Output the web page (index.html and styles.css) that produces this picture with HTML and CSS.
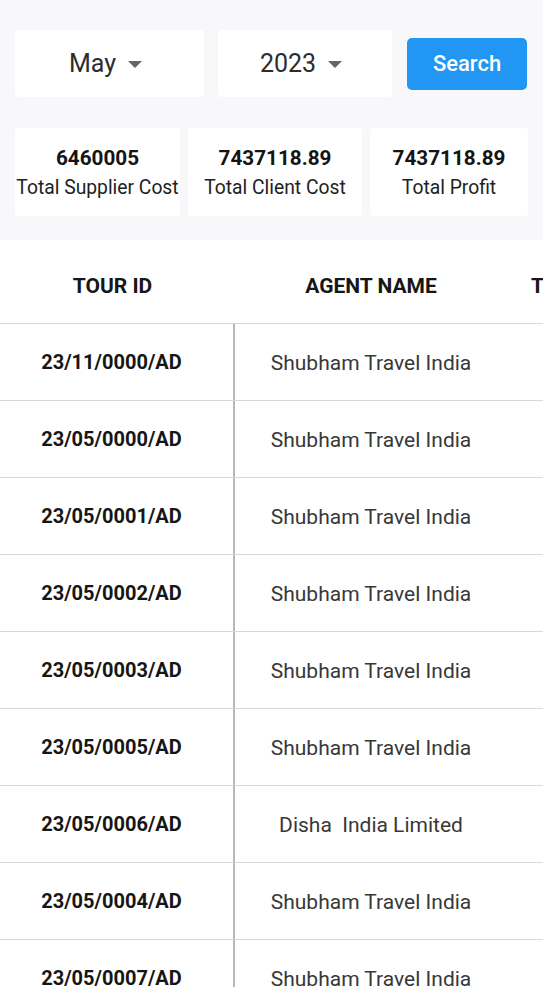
FILE: index.html
```html
<!DOCTYPE html>
<html>
<head>
<meta charset="utf-8">
<link rel="stylesheet" href="styles.css">
</head>
<body>
<div class="top">
  <div class="filters">
    <div class="select select-month"><span>May</span><span class="caret"></span></div>
    <div class="select select-year"><span>2023</span><span class="caret"></span></div>
    <button class="search">Search</button>
  </div>
  <div class="cards">
    <div class="card"><div class="num">6460005</div><div class="label">Total Supplier Cost</div></div>
    <div class="card"><div class="num">7437118.89</div><div class="label">Total Client Cost</div></div>
    <div class="card"><div class="num">7437118.89</div><div class="label">Total Profit</div></div>
  </div>
</div>
<div class="table-wrap">
  <div class="table">
    <div class="row head">
      <div class="cell c1">TOUR ID</div>
      <div class="cell c2">AGENT NAME</div>
      <div class="cell c3">TOUR NAME</div>
    </div>
    <div class="row"><div class="cell c1">23/11/0000/AD</div><div class="cell c2">Shubham Travel India</div><div class="cell c3"></div></div>
    <div class="row"><div class="cell c1">23/05/0000/AD</div><div class="cell c2">Shubham Travel India</div><div class="cell c3"></div></div>
    <div class="row"><div class="cell c1">23/05/0001/AD</div><div class="cell c2">Shubham Travel India</div><div class="cell c3"></div></div>
    <div class="row"><div class="cell c1">23/05/0002/AD</div><div class="cell c2">Shubham Travel India</div><div class="cell c3"></div></div>
    <div class="row"><div class="cell c1">23/05/0003/AD</div><div class="cell c2">Shubham Travel India</div><div class="cell c3"></div></div>
    <div class="row"><div class="cell c1">23/05/0005/AD</div><div class="cell c2">Shubham Travel India</div><div class="cell c3"></div></div>
    <div class="row"><div class="cell c1">23/05/0006/AD</div><div class="cell c2">Disha&nbsp; India Limited</div><div class="cell c3"></div></div>
    <div class="row"><div class="cell c1">23/05/0004/AD</div><div class="cell c2">Shubham Travel India</div><div class="cell c3"></div></div>
    <div class="row"><div class="cell c1">23/05/0007/AD</div><div class="cell c2">Shubham Travel India</div><div class="cell c3"></div></div>
  </div>
</div>
</body>
</html>
```

FILE: styles.css
```css
* { box-sizing: border-box; }
html, body {
  margin: 0;
  padding: 0;
  background: #ffffff;
  font-family: Roboto, "Noto Sans", "Liberation Sans", sans-serif;
  width: 543px;
  overflow: hidden;
}
.top {
  background: #f8f7fa;
  height: 240px;
  padding: 30px 0 0 15px;
}
.filters {
  display: flex;
  align-items: center;
  height: 67px;
}
.select {
  height: 67px;
  background: #ffffff;
  border-radius: 3px;
  display: flex;
  align-items: center;
  justify-content: center;
  gap: 12px;
  font-size: 25px;
  color: #2d2d2d;
}
.select-month { width: 189px; margin-right: 14px; padding-right: 8px; }
.select-year { width: 174px; margin-right: 15px; padding-right: 8px; }
.caret {
  width: 0;
  height: 0;
  border-left: 7px solid transparent;
  border-right: 7px solid transparent;
  border-top: 7px solid #666666;
  margin-top: 1px;
}
.search {
  width: 120px;
  height: 52px;
  border: none;
  border-radius: 5px;
  background: #2196f3;
  color: #ffffff;
  font-family: Roboto, "Noto Sans", sans-serif;
  font-size: 22px;
  font-weight: 500;
  padding: 0;
}
.cards {
  margin-top: 31px;
  display: grid;
  grid-template-columns: 165px 174px 158px;
  column-gap: 8px;
}
.card {
  height: 88px;
  background: #ffffff;
  border-radius: 3px;
  display: flex;
  flex-direction: column;
  align-items: center;
  justify-content: center;
  text-align: center;
  white-space: nowrap;
  padding-top: 2px;
}
.num {
  font-size: 20.7px;
  font-weight: 700;
  color: #141414;
  line-height: 30px;
}
.label {
  font-size: 19.3px;
  color: #222222;
  line-height: 30px;
}
.table-wrap {
  height: 747px;
  overflow: hidden;
  background: #ffffff;
}
.table {
  width: 800px;
}
.row {
  display: grid;
  grid-template-columns: 235px 272px 293px;
  height: 77px;
  border-bottom: 1.5px solid #d8d8d8;
}
.row.head {
  height: 84px;
}
.cell {
  display: flex;
  align-items: center;
  justify-content: center;
  font-size: 21px;
  white-space: nowrap;
}
.c1 {
  font-size: 20px;
  font-weight: 700;
  color: #161616;
  padding-right: 10px;
  border-right: 2px solid #b8b8b8;
}
.c2 {
  color: #383838;
  padding-top: 2px;
}
.head .c1 { border-right: none; }
.head .cell {
  font-size: 21px;
  font-weight: 700;
  color: #161616;
  padding-top: 8px;
}
.head .c3 {
  justify-content: flex-start;
  padding-left: 24px;
}
```
